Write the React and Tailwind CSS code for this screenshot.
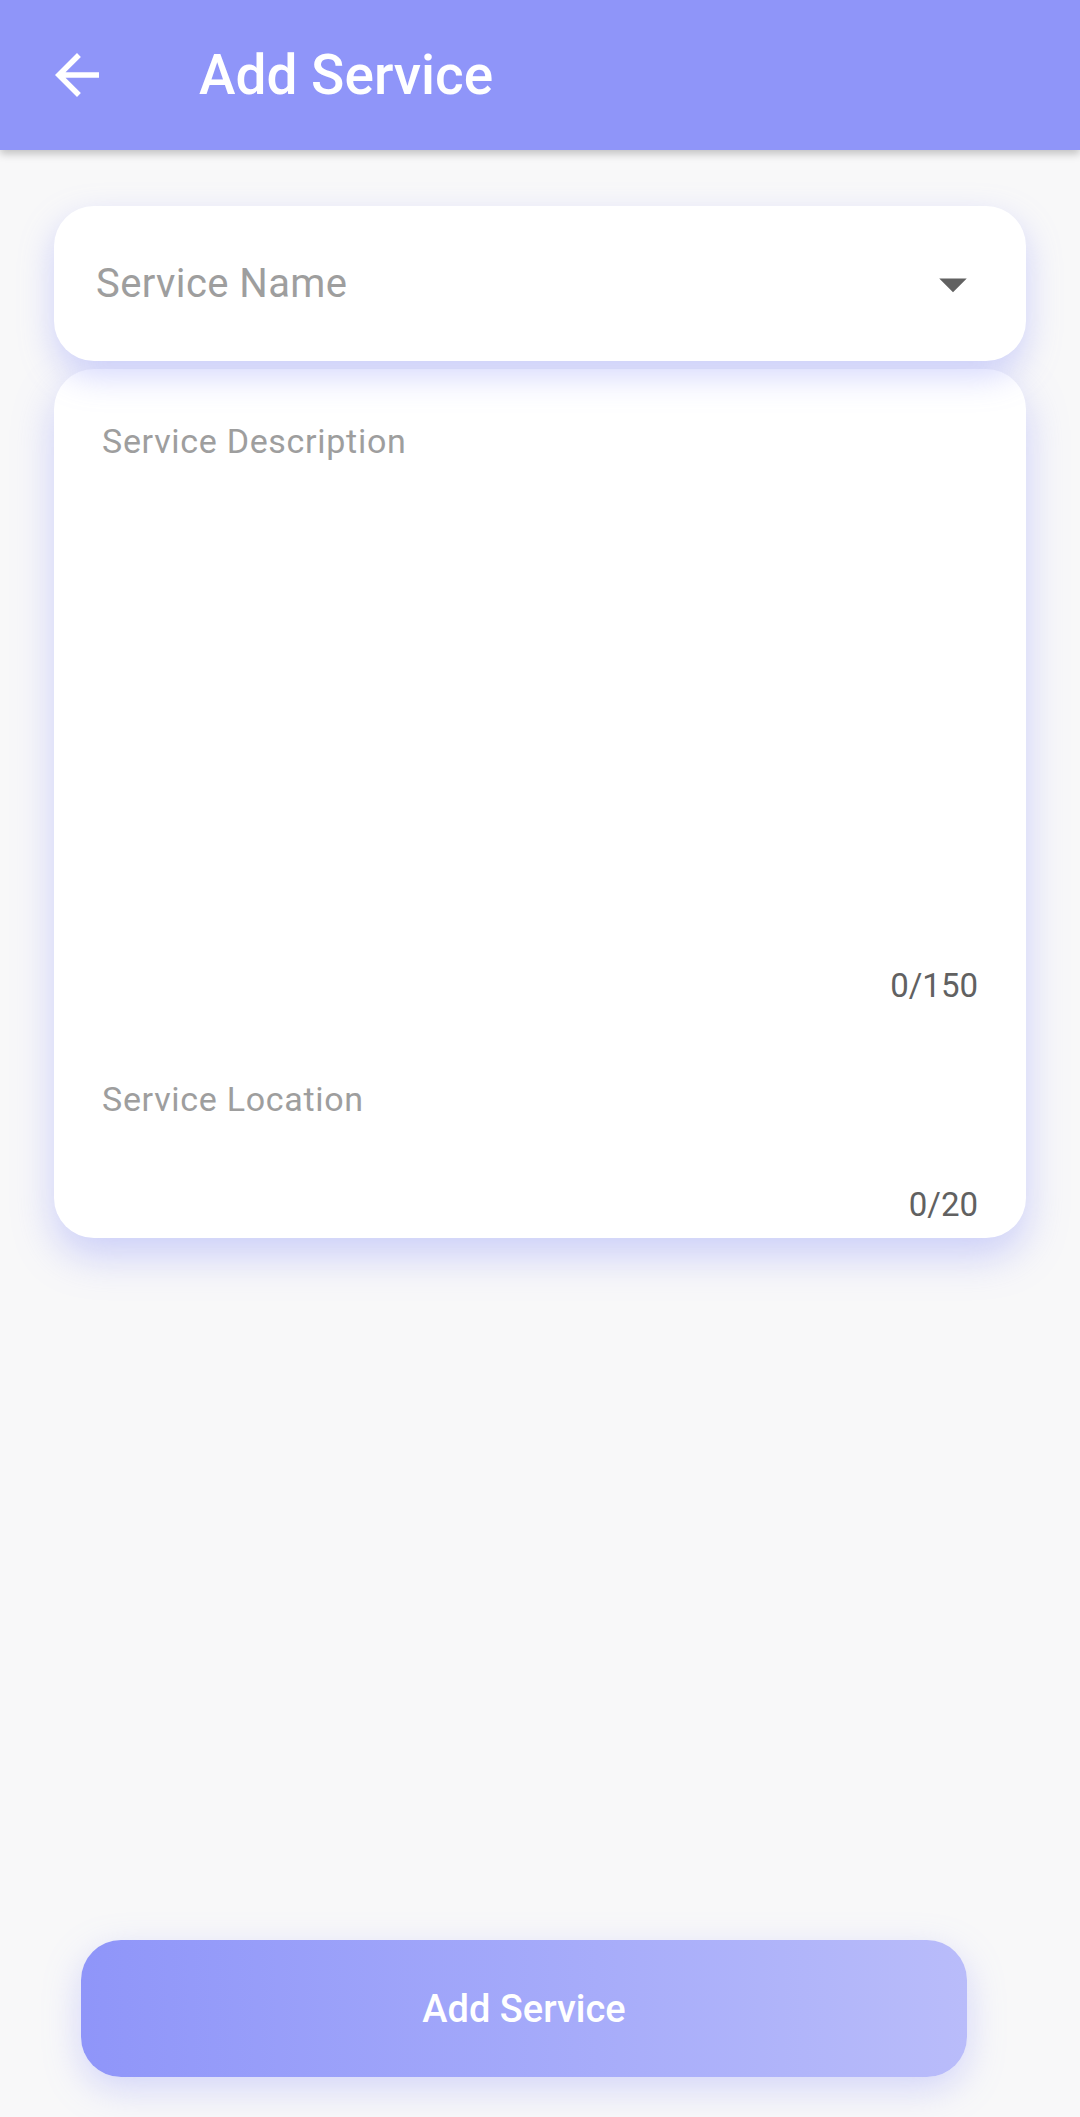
import React from 'react';

const BackArrow = () => (
  <svg viewBox="0 0 24 24" className="w-[66px] h-[66px] fill-white">
    <path d="M20 11H7.83l5.59-5.59L12 4l-8 8 8 8 1.41-1.41L7.83 13H20v-2z" />
  </svg>
);

const DropArrow = () => (
  <svg viewBox="0 0 24 24" className="w-[66px] h-[66px] fill-[#616161]">
    <path d="M7 10l5 5 5-5z" />
  </svg>
);

const App = () => {
  return (
    <div
      className="h-[2117px] w-[1080px] bg-[#f8f8f9] flex flex-col overflow-hidden"
      style={{ fontFamily: 'Roboto, "Noto Sans", sans-serif' }}
    >
      {/* App bar */}
      <div className="h-[150px] shrink-0 bg-[#8f95f9] flex items-center pl-[44px] shadow-[0_4px_8px_rgba(0,0,0,0.22)] relative z-10">
        <BackArrow />
        <h1 className="ml-[89px] text-[55px] leading-none font-medium text-white">Add Service</h1>
      </div>

      {/* Form */}
      <div className="px-[54px] pt-[56px] flex flex-col gap-[8px]">
        {/* Service name dropdown */}
        <div className="h-[155px] bg-white rounded-[40px] flex items-center justify-between pl-[42px] pr-[40px] shadow-[0_14px_34px_rgba(143,149,249,0.4)] relative z-[1]">
          <span className="text-[40px] leading-none tracking-[0.4px] text-[#9e9e9e]">Service Name</span>
          <DropArrow />
        </div>

        {/* Description + location */}
        <div className="bg-white rounded-[40px] px-[48px] pt-[55px] pb-[17px] flex flex-col shadow-[0_18px_40px_rgba(143,149,249,0.42)]">
          <span className="text-[34px] leading-none tracking-[0.7px] text-[#9e9e9e]">Service Description</span>
          <span className="mt-[511px] self-end text-[33px] leading-none text-[#616161]">0/150</span>
          <span className="mt-[80px] text-[34px] leading-none tracking-[0.7px] text-[#9e9e9e]">Service Location</span>
          <span className="mt-[72px] self-end text-[33px] leading-none text-[#616161]">0/20</span>
        </div>
      </div>

      {/* Submit */}
      <button className="mt-auto mb-[40px] ml-[81px] w-[886px] h-[137px] shrink-0 rounded-[40px] bg-linear-to-r from-[#8f95f9] to-[#b9bcfa] text-white text-[38px] font-medium leading-none flex items-center justify-center shadow-[0_12px_36px_rgba(143,149,249,0.35)]">
        Add Service
      </button>
    </div>
  );
};

export default App;
